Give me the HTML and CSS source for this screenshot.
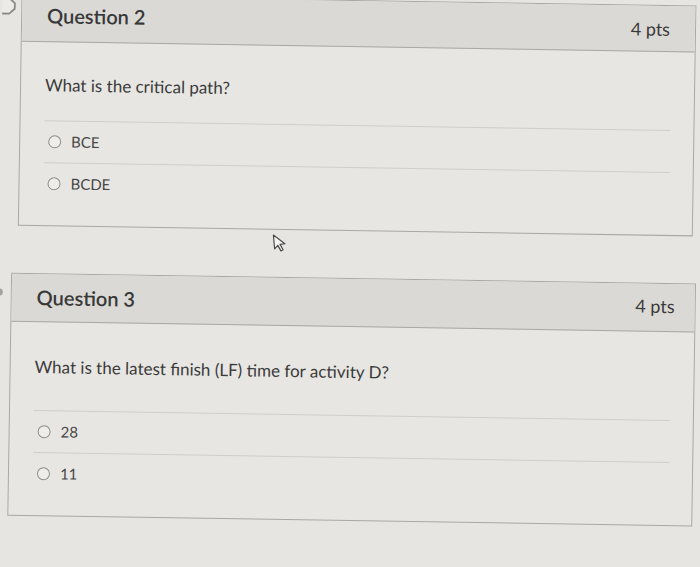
FILE: index.html
```html
<!DOCTYPE html>
<html lang="en">
<head>
<meta charset="utf-8">
<title>Quiz</title>
<link rel="stylesheet" href="styles.css">
</head>
<body>
<div class="page">
  <svg class="flag" width="16" height="22" viewBox="0 0 16 22" aria-hidden="true">
    <path d="M-3 2.5 H7 L12.5 7.5 V13 L7 18 H-3" fill="#ecebe8" stroke="#8a8986" stroke-width="1.8" stroke-linejoin="round"/>
  </svg>
  <span class="flag-dot"></span>

  <section class="question q2">
    <header class="q-head">
      <h2 class="q-title">Question 2</h2>
      <span class="q-pts">4 pts</span>
    </header>
    <div class="q-body">
      <p class="q-text">What is the critical path?</p>
      <ul class="answers">
        <li class="answer"><span class="radio"></span><span class="a-text">BCE</span></li>
        <li class="answer"><span class="radio"></span><span class="a-text">BCDE</span></li>
      </ul>
    </div>
  </section>

  <section class="question q3">
    <header class="q-head">
      <h2 class="q-title">Question 3</h2>
      <span class="q-pts">4 pts</span>
    </header>
    <div class="q-body">
      <p class="q-text">What is the latest finish (LF) time for activity D?</p>
      <ul class="answers">
        <li class="answer"><span class="radio"></span><span class="a-text">28</span></li>
        <li class="answer"><span class="radio"></span><span class="a-text">11</span></li>
      </ul>
    </div>
  </section>

  <svg class="cursor" width="16" height="20" viewBox="0 0 16 20" aria-hidden="true">
    <path d="M1.5 1.5 L1.5 15.5 L5 12.2 L7.6 18 L9.8 17 L7.3 11.4 L12.2 11.2 Z" fill="#f4f4f2" stroke="#4a4a4a" stroke-width="1.2" stroke-linejoin="round"/>
  </svg>
</div>
</body>
</html>
```

FILE: styles.css
```css
* { box-sizing: border-box; }

html, body {
  margin: 0;
  padding: 0;
  background: #e6e5e1;
  overflow: hidden;
}

body {
  font-family: Lato, "Open Sans", "Liberation Sans", sans-serif;
  color: #3a3a3a;
}

.page {
  position: relative;
  width: 700px;
  height: 567px;
  display: flex;
  flex-direction: column;
  transform: rotate(0.9deg);
  transform-origin: 350px 283px;
}

.question {
  border: 1px solid #a9a8a4;
  background: #e7e6e2;
}

.q2 {
  margin: 0 8px 0 17px;
}

.q3 {
  margin: 47px 4px 0 11px;
}

.q-head {
  display: flex;
  justify-content: space-between;
  align-items: flex-start;
  height: 46px;
  padding: 7px 25px 0 25px;
  background: #dad9d5;
  border-bottom: 1px solid #a9a8a4;
}

.q3 .q-head {
  height: 48px;
  padding: 11px 20px 0 25px;
}

.q-title {
  margin: 0;
  font-size: 20px;
  line-height: 24px;
  font-weight: 600;
  color: #383838;
}

.q-pts {
  margin-top: 5px;
  font-size: 18px;
  line-height: 22px;
  color: #3a3a3a;
}

.q3 .q-pts {
  margin-top: 0;
}

.q-body {
  padding: 32px 23px 21px 24px;
}

.q3 .q-body {
  padding-top: 34px;
}

.q-text {
  margin: 0 0 24px;
  font-size: 17px;
  line-height: 22px;
  color: #3b3b3b;
}

.q3 .q-text {
  margin-bottom: 32px;
}

.answers {
  list-style: none;
  margin: 0;
  padding: 0;
}

.answer {
  display: flex;
  align-items: center;
  height: 42px;
  padding: 1px 0 2px 4px;
  border-top: 1px solid #cfceca;
}

.radio {
  width: 13px;
  height: 13px;
  border: 1.5px solid #8c8c8a;
  border-radius: 50%;
  background: #eeede9;
  flex: none;
}

.a-text {
  margin-left: 10px;
  font-size: 15px;
  line-height: 20px;
  color: #474747;
}

.flag {
  position: absolute;
  left: -2px;
  top: 1px;
}

.flag-dot {
  position: absolute;
  left: -3px;
  top: 294px;
  width: 6px;
  height: 7px;
  border-radius: 50%;
  background: #a3a29f;
}

.cursor {
  position: absolute;
  left: 272px;
  top: 234px;
  transform: rotate(-6deg);
}
```
